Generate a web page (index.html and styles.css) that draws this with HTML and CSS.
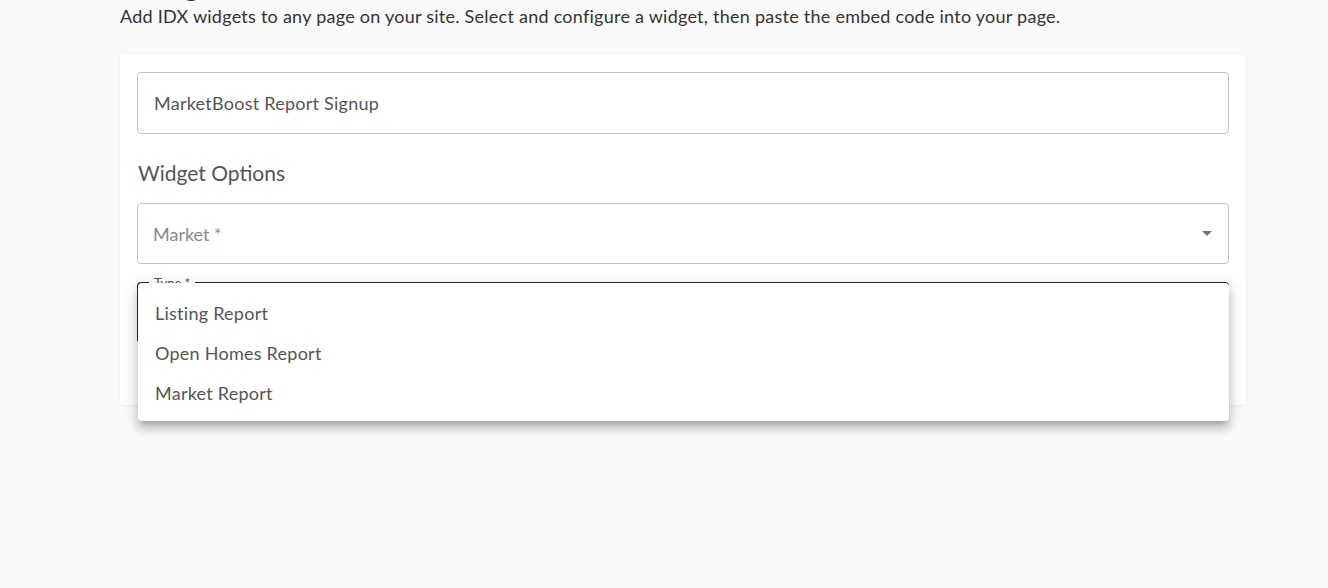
FILE: index.html
```html
<!DOCTYPE html>
<html lang="en">
<head>
    <meta charset="UTF-8">
    <meta name="viewport" content="width=device-width, initial-scale=1.0">
    <title>Widgets</title>
    <link rel="stylesheet" href="styles.css">
</head>
<body>
    <div class="container">
        <h1>Widgets</h1>
        <p class="subtitle">Add IDX widgets to any page on your site. Select and configure a widget, then paste the embed code into your page.</p>

        <div class="card">
            <div class="field">
                <div class="input-value">MarketBoost Report Signup</div>
            </div>

            <h2>Widget Options</h2>

            <div class="field select">
                <div class="placeholder">Market *</div>
                <span class="arrow"></span>
            </div>

            <div class="type-wrap">
                <div class="field select focused">
                    <span class="legend">Type *</span>
                </div>

                <ul class="menu">
                    <li>Listing Report</li>
                    <li>Open Homes Report</li>
                    <li>Market Report</li>
                </ul>
            </div>
        </div>
    </div>
</body>
</html>
```

FILE: styles.css
```css
html, body {
    min-height: 100%;
}
body {
    margin: 0;
    background: #fafafa;
    font-family: Lato, "Open Sans", sans-serif;
    color: #333;
}
.container {
    margin: 0 82px 0 120px;
    padding-bottom: 180px;
}
h1 {
    font-size: 34px;
    font-weight: 400;
    line-height: 40px;
    margin: -38px 0 0;
    color: #333;
}
.subtitle {
    font-size: 18px;
    line-height: 28px;
    letter-spacing: 0.25px;
    margin: 0 0 24px;
    color: #333;
}
.card {
    background: #fff;
    border-radius: 4px;
    box-shadow: 0 1px 3px rgba(0,0,0,0.06);
    padding: 18px 17px 62px;
}
.field {
    box-sizing: border-box;
    height: 62px;
    border: 1px solid #c4c4c4;
    border-radius: 4px;
    padding: 0 16px;
    display: flex;
    align-items: center;
    font-size: 18px;
    letter-spacing: 0.25px;
    color: #555;
    position: relative;
}
.select {
    height: 61px;
    padding-left: 15px;
}
.placeholder {
    color: #8a8a8a;
    letter-spacing: 0;
}
.arrow {
    margin-left: auto;
    width: 0;
    height: 0;
    border-left: 5px solid transparent;
    border-right: 5px solid transparent;
    border-top: 5px solid #757575;
}
h2 {
    font-size: 21px;
    font-weight: 400;
    line-height: 32px;
    margin: 23px 0 14px 1px;
    color: #555;
}
.type-wrap {
    position: relative;
    margin-top: 18px;
}
.focused {
    border: 2px solid #263238;
}
.legend {
    position: absolute;
    top: -9px;
    left: 10px;
    background: #fff;
    padding: 0 5px;
    font-size: 13px;
    line-height: 16px;
    letter-spacing: 0;
    color: #555;
}
.menu {
    position: absolute;
    top: 1px;
    left: 1px;
    right: 0;
    margin: 0;
    padding: 10px 0 8px;
    list-style: none;
    background: #fff;
    border-radius: 4px;
    box-shadow: 0 5px 5px -3px rgba(0,0,0,0.2), 0 8px 10px 1px rgba(0,0,0,0.14), 0 3px 14px 2px rgba(0,0,0,0.12);
}
.menu li {
    height: 40px;
    line-height: 40px;
    padding: 0 17px;
    font-size: 18px;
    letter-spacing: 0.25px;
    color: #555;
}
```
